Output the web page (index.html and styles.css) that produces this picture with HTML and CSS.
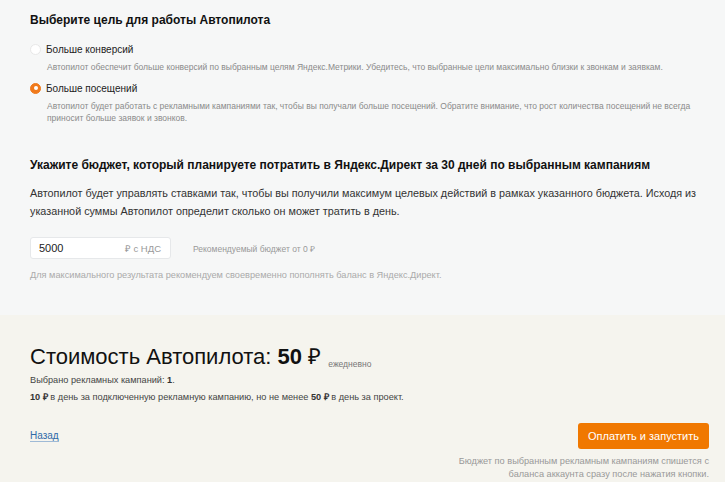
FILE: index.html
```html
<!DOCTYPE html>
<html lang="ru">
<head>
    <meta charset="UTF-8">
    <meta name="viewport" content="width=device-width, initial-scale=1.0">
    <title>Автопилот</title>
    <link rel="stylesheet" href="styles.css">
</head>
<body>
    <div class="settings">
        <section class="goal">
            <h2>Выберите цель для работы Автопилота</h2>
            <label class="option">
                <span class="radio"></span>
                <span class="option-title">Больше конверсий</span>
            </label>
            <p class="option-desc">Автопилот обеспечит больше конверсий по выбранным целям Яндекс.Метрики. Убедитесь, что выбранные цели максимально близки к звонкам и заявкам.</p>
            <label class="option">
                <span class="radio checked"></span>
                <span class="option-title">Больше посещений</span>
            </label>
            <p class="option-desc">Автопилот будет работать с рекламными кампаниями так, чтобы вы получали больше посещений. Обратите внимание, что рост количества посещений не всегда приносит больше заявок и звонков.</p>
        </section>

        <section class="budget">
            <h2>Укажите бюджет, который планируете потратить в Яндекс.Директ за 30 дней по выбранным кампаниям</h2>
            <p class="lead">Автопилот будет управлять ставками так, чтобы вы получили максимум целевых действий в рамках указанного бюджета. Исходя из указанной суммы Автопилот определит сколько он может тратить в день.</p>
            <div class="budget-row">
                <div class="field">
                    <span class="field-value">5000</span>
                    <span class="field-unit">₽ с НДС</span>
                </div>
                <span class="hint">Рекомендуемый бюджет от 0 ₽</span>
            </div>
            <p class="note">Для максимального результата рекомендуем своевременно пополнять баланс в Яндекс.Директ.</p>
        </section>
    </div>

    <div class="summary">
        <div class="price">Стоимость Автопилота: <b>50</b> ₽ <span class="period">ежедневно</span></div>
        <p class="summary-line">Выбрано рекламных кампаний: <b>1</b>.</p>
        <p class="summary-line"><b>10 ₽</b> в день за подключенную рекламную кампанию, но не менее <b>50 ₽</b> в день за проект.</p>
        <div class="actions">
            <a href="#" class="back">Назад</a>
            <button type="button" class="pay">Оплатить и запустить</button>
        </div>
        <p class="pay-note">Бюджет по выбранным рекламным кампаниям спишется с<br>баланса аккаунта сразу после нажатия кнопки.</p>
    </div>
</body>
</html>
```

FILE: styles.css
```css
body {
    margin: 0;
    font-family: "Liberation Sans", Arial, sans-serif;
    color: #1f1f1f;
    background-color: #f6f7f7;
}
p {
    margin: 0;
}
h2 {
    margin: 0;
    font-size: 12px;
    font-weight: bold;
    color: #111;
}
.settings {
    padding: 13px 20px 0 30px;
    height: 302px;
}
.goal h2 {
    margin-bottom: 15px;
}
.option {
    display: flex;
    align-items: center;
    gap: 5px;
    height: 14px;
    font-size: 10px;
    color: #222;
}
.radio {
    width: 11px;
    height: 11px;
    border-radius: 50%;
    background: #fff;
    border: 1px solid #e8e8e8;
    box-sizing: border-box;
}
.radio.checked {
    background: #f07a1c;
    border-color: #f07a1c;
    display: flex;
    align-items: center;
    justify-content: center;
}
.radio.checked::after {
    content: "";
    width: 4px;
    height: 4px;
    border-radius: 50%;
    background: #fff;
}
.option-desc {
    margin: 5px 10px 8px 17px;
    font-size: 8.5px;
    line-height: 12px;
    color: #8a8a8a;
}
.budget {
    margin-top: 34px;
}
.budget h2 {
    margin-bottom: 12px;
}
.lead {
    font-size: 10.8px;
    line-height: 18px;
    color: #333;
}
.budget-row {
    display: flex;
    align-items: center;
    gap: 22px;
    margin-top: 17px;
}
.field {
    width: 141px;
    height: 22px;
    box-sizing: border-box;
    background: #fff;
    border: 1px solid #e6e8ea;
    border-radius: 3px;
    display: flex;
    align-items: center;
    justify-content: space-between;
    padding: 0 9px 0 8px;
}
.field-value {
    font-size: 11px;
    color: #222;
}
.field-unit {
    font-size: 9.5px;
    color: #999;
}
.hint {
    font-size: 8.5px;
    color: #999;
}
.note {
    margin-top: 11px;
    font-size: 9.2px;
    color: #aaa;
}
.summary {
    background-color: #f5f4ee;
    padding: 25px 16px 0 30px;
    height: 167px;
    box-sizing: border-box;
}
.price {
    font-size: 22px;
    color: #111;
}
.price b {
    font-size: 22px;
}
.period {
    font-size: 8.5px;
    color: #777;
    margin-left: 1px;
    vertical-align: -3px;
}
.summary-line {
    font-size: 9.2px;
    color: #444;
    margin-top: 5px;
}
.summary-line b {
    color: #333;
}
.actions {
    display: flex;
    justify-content: space-between;
    align-items: center;
    margin-top: 20px;
}
.back {
    font-size: 10px;
    color: #2f6aa8;
    text-decoration: none;
    border-bottom: 1px solid #9fbad6;
}
.pay {
    font-family: inherit;
    font-size: 11px;
    color: #fff;
    background: #f07800;
    border: none;
    border-radius: 3px;
    width: 131px;
    height: 26px;
    cursor: pointer;
}
.pay-note {
    text-align: right;
    font-size: 9.2px;
    line-height: 13px;
    color: #999;
    margin-top: 6px;
}
```
